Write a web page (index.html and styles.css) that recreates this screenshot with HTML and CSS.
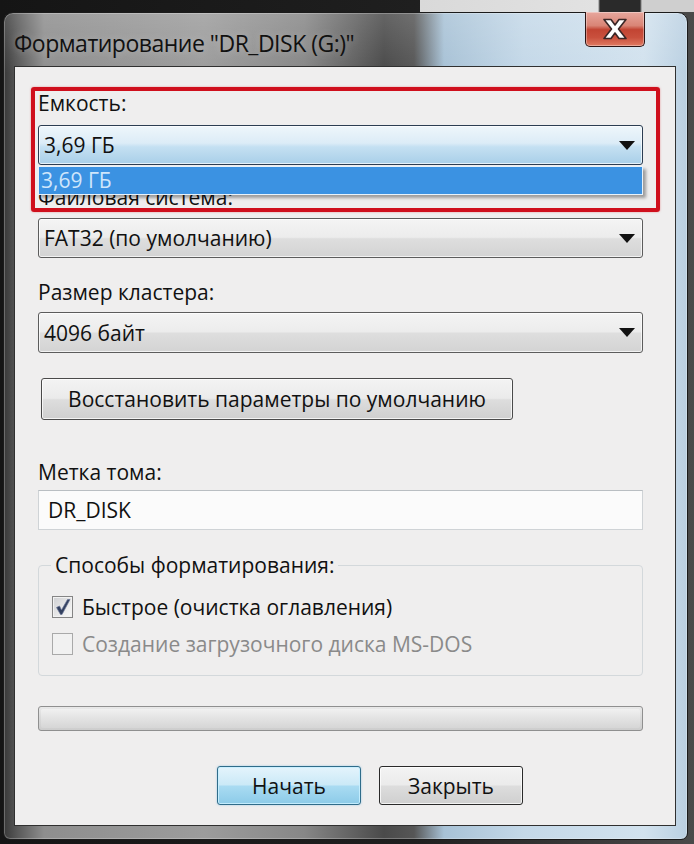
FILE: index.html
```html
<!DOCTYPE html>
<html lang="ru">
<head>
<meta charset="utf-8">
<title>Форматирование</title>
<link rel="stylesheet" href="styles.css">
</head>
<body>
<div class="screen">
  <div class="window">
    <div class="titlebar">
      <span class="title">Форматирование "DR_DISK (G:)"</span>
      <div class="close">
        <svg width="28" height="22" viewBox="0 0 28 22"><path d="M3 1.5 H10 L14 7 L18 1.5 H25 L17.5 11 L25 20.5 H18 L14 15 L10 20.5 H3 L10.5 11 Z" fill="#fff" stroke="#3a2626" stroke-width="1.6" stroke-linejoin="round"/></svg>
      </div>
    </div>
    <div class="client">
      <div class="highlight"></div>
      <div class="label l-cap">Емкость:</div>
      <div class="combo combo-focus c-cap"><span>3,69 ГБ</span><i class="arrow"></i></div>
      <div class="droplist">3,69 ГБ</div>
      <div class="label l-fs">Файловая система:</div>
      <div class="combo c-fs"><span>FAT32 (по умолчанию)</span><i class="arrow"></i></div>
      <div class="label l-cl">Размер кластера:</div>
      <div class="combo c-cl"><span>4096 байт</span><i class="arrow"></i></div>
      <div class="btn btn-restore">Восстановить параметры по умолчанию</div>
      <div class="label l-vol">Метка тома:</div>
      <div class="input">DR_DISK</div>
      <fieldset class="group">
        <legend>Способы форматирования:</legend>
        <div class="check-row">
          <span class="box checked"><svg width="18" height="18" viewBox="0 0 18 18"><path d="M2.5 9.5 L5.5 8 L7.5 12 L13.5 1.5 L16 1.5 L8 16.5 L6.5 16.5 Z" fill="#33405f" stroke="#6a7696" stroke-width="0.7" stroke-linejoin="round"/></svg></span>
          <span class="check-text">Быстрое (очистка оглавления)</span>
        </div>
        <div class="check-row disabled">
          <span class="box"></span>
          <span class="check-text">Создание загрузочного диска MS-DOS</span>
        </div>
      </fieldset>
      <div class="progress"><div class="progress-shine"></div></div>
      <div class="actions">
        <div class="btn btn-start">Начать</div>
        <div class="btn btn-close">Закрыть</div>
      </div>
    </div>
  </div>
</div>
</body>
</html>
```
FILE: styles.css
```css
html, body {
  margin: 0;
  padding: 0;
}
body {
  width: 694px;
  height: 844px;
  overflow: hidden;
  font-family: "Open Sans", "Noto Sans", sans-serif;
}
.screen {
  width: 694px;
  height: 844px;
  box-sizing: border-box;
  padding: 12px 6px 4px 3px;
  background:
    linear-gradient(to right, transparent 0, transparent 420px, #d9d9d9 420px, #e2e2e2 598px, #2a2a2a 600px, #2a2a2a 640px, #cfcfcf 642px, #cfcfcf 694px) top / 694px 12px no-repeat,
    linear-gradient(to right, #151515, #1f1f1f 60%, #4a4a4a);
}
.window {
  position: relative;
  height: 828px;
  box-sizing: border-box;
  border: 1px solid #1b1b1b;
  border-radius: 10px 10px 7px 7px;
  padding: 0 11px 13px 10px;
  display: flex;
  flex-direction: column;
  background:
    linear-gradient(to bottom, rgba(255,255,255,0.15), rgba(255,255,255,0) 60px),
    linear-gradient(to right, #3a3a3a 0, #5a5a5a 14px, #8e8e8e 40px, #9c9c9c 200px, #878787 300px, #4a4a4a 380px, #565656 410px, #a8c2d6 440px, #c4d8e8 520px, #d2e2ee 640px, #b9cfe1 685px);
  box-shadow: inset 0 0 0 1px rgba(255,255,255,0.25);
}
.titlebar {
  height: 53px;
  flex: none;
  box-sizing: border-box;
  padding-top: 16px;
}
.title {
  font-size: 23px;
  line-height: 28px;
  color: #111;
  letter-spacing: -0.5px;
  text-shadow: 0 0 8px rgba(255,255,255,0.3);
}
.close {
  position: absolute;
  left: 581px;
  top: -1px;
  width: 60px;
  height: 35px;
  box-sizing: border-box;
  border: 1px solid #2c1414;
  border-top: none;
  border-radius: 0 0 5px 5px;
  background: linear-gradient(to bottom, #e7a79d 0%, #d98576 40%, #c24433 52%, #c9503d 75%, #e07a62 100%);
  box-shadow: inset 0 0 0 1px rgba(255,255,255,0.35);
  display: flex;
  align-items: center;
  justify-content: center;
}
.client {
  position: relative;
  flex: 1;
  box-sizing: border-box;
  border: 1px solid #303030;
  background: #efeeee;
  padding: 23px 32px 0 23px;
  display: flex;
  flex-direction: column;
  color: #111;
  font-size: 21px;
}
.highlight {
  position: absolute;
  left: 16px;
  top: 20px;
  width: 629px;
  height: 125px;
  box-sizing: border-box;
  border: 4px solid #cf0f1c;
  border-radius: 3px;
  box-shadow: 0 0 2px rgba(220,40,50,0.5);
  z-index: 2;
}
.label {
  height: 26px;
  line-height: 26px;
}
.combo {
  position: relative;
  box-sizing: border-box;
  height: 41px;
  border: 1px solid #5c5c5c;
  border-radius: 3px;
  display: flex;
  align-items: center;
  padding-left: 5px;
  background: linear-gradient(to bottom, #f4f4f4 0%, #ececec 48%, #dedede 52%, #d3d3d3 100%);
  box-shadow: inset 0 0 0 1px rgba(255,255,255,0.7);
}
.combo span {
  flex: 1;
}
.combo-focus {
  border-color: #2c3d52;
  background: linear-gradient(to bottom, #eef6fb 0%, #dcecf7 45%, #c4e0f2 55%, #a9cfe8 100%);
}
.arrow {
  width: 0;
  height: 0;
  border-left: 8px solid transparent;
  border-right: 8px solid transparent;
  border-top: 9px solid #111;
  margin-right: 7px;
}
.c-cap { margin-top: 9px; height: 40px; }
.droplist {
  position: absolute;
  left: 23px;
  top: 99px;
  width: 605px;
  height: 29px;
  box-sizing: border-box;
  background: #3b92e2;
  border: 1px solid #e8f2fa;
  box-shadow: 3px 3px 3px rgba(0,0,0,0.35);
  color: #cfe6fb;
  line-height: 27px;
  padding-left: 2px;
  z-index: 1;
}
.l-fs { margin-top: 19px; }
.c-fs { margin-top: 8px; height: 40px; }
.l-cl { margin-top: 21px; }
.c-cl { margin-top: 7px; }
.btn {
  box-sizing: border-box;
  border: 1px solid #4a4a4a;
  border-radius: 3px;
  display: flex;
  align-items: center;
  justify-content: center;
  background: linear-gradient(to bottom, #f3f3f3 0%, #ebebeb 48%, #dddddd 52%, #cfcfcf 100%);
  box-shadow: inset 0 0 0 1px rgba(255,255,255,0.75);
}
.btn-restore {
  margin-top: 25px;
  margin-left: 3px;
  width: 472px;
  height: 42px;
}
.l-vol { margin-top: 39px; }
.input {
  margin-top: 5px;
  height: 40px;
  box-sizing: border-box;
  border: 1px solid #cfd3d6;
  border-top-color: #b9bec2;
  background: #fbfbfb;
  line-height: 38px;
  padding-left: 9px;
}
.group {
  margin: 22px 0 0 0;
  padding: 14px 0 16px 13px;
  border: 1px solid #d3d8db;
  border-radius: 4px;
  min-width: 0;
}
.group legend {
  padding: 0 4px;
  margin-left: -1px;
  line-height: 26px;
}
.check-row {
  height: 30px;
  display: flex;
  align-items: center;
  gap: 9px;
}
.check-row + .check-row {
  margin-top: 7px;
}
.box {
  width: 21px;
  height: 22px;
  box-sizing: border-box;
  border: 1px solid #858585;
  background: linear-gradient(135deg, #cfd0d3, #eeeeee 70%, #f7f7f7);
  box-shadow: inset 0 0 0 1px #f2f2f2;
  display: flex;
  align-items: center;
  justify-content: center;
}
.disabled .box {
  border-color: #a9a9a9;
  background: #f1f1f1;
  box-shadow: none;
}
.disabled .check-text {
  color: #8a8a8a;
}
.progress {
  margin-top: 30px;
  height: 25px;
  box-sizing: border-box;
  border: 1px solid #8f8f8f;
  border-radius: 3px;
  background: linear-gradient(to bottom, #e9e9e9 0%, #d9d9d9 50%, #cdcdcd 100%);
  padding: 2px;
}
.progress-shine {
  height: 100%;
  border-radius: 2px;
  background: linear-gradient(to bottom, #f1f1f1 0%, #e4e4e4 45%, #d6d6d6 100%);
}
.actions {
  margin-top: 35px;
  display: flex;
  gap: 18px;
  padding-left: 179px;
}
.btn-start,
.btn-close {
  width: 144px;
  height: 39px;
  border-color: #2a2a2a;
}
.btn-start {
  border-color: #2f6c8a;
  background: linear-gradient(to bottom, #e4f4fc 0%, #cbe9f7 48%, #a9dbf2 52%, #8ccbe8 100%);
  box-shadow: inset 0 0 0 1px rgba(200,240,255,0.9), 0 0 2px rgba(60,160,220,0.5);
}
```
